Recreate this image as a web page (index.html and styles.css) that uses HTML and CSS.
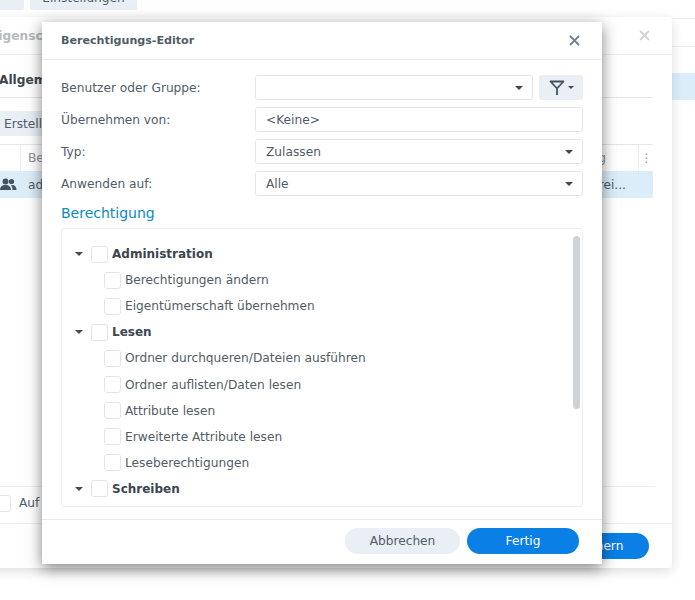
FILE: index.html
```html
<!DOCTYPE html>
<html lang="de">
  <head>
    <meta charset="UTF-8" />
    <meta name="viewport" content="width=device-width, initial-scale=1.0" />
    <title>Berechtigungs-Editor</title>
    <link rel="stylesheet" href="styles.css">
  </head>
  <body>
    <div class="desktop">
      <div class="top-tabs">
        <span class="top-tab top-tab-first"></span>
        <span class="top-tab">Einstellungen</span>
      </div>
      <div class="behind-lines"></div>

      <div class="window-back">
        <div class="back-head">
          <span class="back-title">Eigenschaften</span>
          <svg class="back-close" width="11" height="11" viewBox="0 0 11 11">
            <path d="M1 1l9 9M10 1l-9 9" stroke="#cfd2d5" stroke-width="1.800" fill="none" />
          </svg>
        </div>
        <div class="back-tabs"><b>Allgemein</b></div>
        <div class="back-body">
          <div class="back-toolbar"><span class="back-btn">Erstellen</span></div>
          <div class="back-table-head">
            <span class="back-col-icon"></span>
            <span class="back-col-name">Benutzer</span>
            <span class="back-col-last">g</span>
            <span class="back-col-more">⋮</span>
          </div>
          <div class="back-row">
            <svg class="back-user" width="17" height="13" viewBox="0 0 17 13">
              <circle cx="5.5" cy="3.5" r="3" fill="#45525f" />
              <path d="M0 12c0-3 2-5 5.5-5s5.5 2 5.5 5z" fill="#45525f" />
              <circle cx="11.5" cy="3.5" r="2.6" fill="#45525f" />
              <path d="M12 7c3 0 4.500 2 4.500 5H12.500c0-2-.5-3.500-1.500-4.700z" fill="#45525f" />
            </svg>
            <span class="back-col-name">admin</span>
            <span class="back-row-last">Lesen, Schrei...</span>
          </div>
        </div>
        <div class="back-check-row">
          <span class="check"></span>
          <span>Auf untergeordnete Objekte anwenden</span>
        </div>
        <div class="back-foot"><span class="btn-primary back-save">Speichern</span></div>
      </div>

      <div class="dialog">
        <div class="dialog-head">
          <span class="dialog-title">Berechtigungs-Editor</span>
          <svg class="dialog-close" width="11" height="11" viewBox="0 0 11 11">
            <path d="M1 1l9 9M10 1l-9 9" stroke="#77808a" stroke-width="1.800" fill="none" />
          </svg>
        </div>

        <div class="dialog-body">
          <div class="form-row">
            <label>Benutzer oder Gruppe:</label>
            <div class="field field-short"><span></span><i class="caret"></i></div>
            <div class="filter-btn">
              <svg width="16" height="16" viewBox="0 0 16 16">
                <path d="M1.500 1.500h13L8 8.500zM8 8.500V15" fill="none" stroke="#45525f" stroke-width="1.800" stroke-linejoin="round" />
              </svg>
              <i class="caret caret-small"></i>
            </div>
          </div>
          <div class="form-row">
            <label>Übernehmen von:</label>
            <div class="field"><span>&lt;Keine&gt;</span></div>
          </div>
          <div class="form-row">
            <label>Typ:</label>
            <div class="field"><span>Zulassen</span><i class="caret"></i></div>
          </div>
          <div class="form-row">
            <label>Anwenden auf:</label>
            <div class="field"><span>Alle</span><i class="caret"></i></div>
          </div>

          <h2>Berechtigung</h2>

          <div class="tree">
            <div class="tree-scrollbar"></div>
            <div class="tree-row group"><i class="caret"></i><span class="check"></span><span>Administration</span></div>
            <div class="tree-row child"><span class="check"></span><span>Berechtigungen ändern</span></div>
            <div class="tree-row child"><span class="check"></span><span>Eigentümerschaft übernehmen</span></div>
            <div class="tree-row group"><i class="caret"></i><span class="check"></span><span>Lesen</span></div>
            <div class="tree-row child"><span class="check"></span><span>Ordner durchqueren/Dateien ausführen</span></div>
            <div class="tree-row child"><span class="check"></span><span>Ordner auflisten/Daten lesen</span></div>
            <div class="tree-row child"><span class="check"></span><span>Attribute lesen</span></div>
            <div class="tree-row child"><span class="check"></span><span>Erweiterte Attribute lesen</span></div>
            <div class="tree-row child"><span class="check"></span><span>Leseberechtigungen</span></div>
            <div class="tree-row group"><i class="caret"></i><span class="check"></span><span>Schreiben</span></div>
            <div class="tree-row child"><span class="check"></span></div>
          </div>
        </div>

        <div class="dialog-foot">
          <span class="btn-cancel">Abbrechen</span>
          <span class="btn-primary">Fertig</span>
        </div>
      </div>
    </div>
  </body>
</html>
```

FILE: styles.css
```css
* {
  box-sizing: border-box;
}
html,
body {
  margin: 0;
  height: 600px;
  overflow: hidden;
}
body {
  font-family: "DejaVu Sans", sans-serif;
  font-size: 12.2px;
  color: #515c67;
  background: #fff;
}
.desktop {
  position: relative;
  width: 695px;
  height: 600px;
  overflow: hidden;
}

/* page behind the windows */
.top-tabs {
  display: flex;
  gap: 6px;
  margin-left: -40px;
  margin-top: -14px;
  height: 24px;
}
.top-tab {
  display: flex;
  align-items: center;
  justify-content: center;
  width: 107px;
  background: #e9eff5;
  border-radius: 2px;
}
.top-tab-first {
  width: 64px;
}
.behind-lines {
  position: absolute;
  left: 660px;
  top: 18px;
  width: 40px;
  height: 82px;
  border-top: 1px solid #eceef0;
  background:
    linear-gradient(#eceef0, #eceef0) 0 27px / 100% 1px no-repeat,
    linear-gradient(#dcedfa, #dcedfa) 0 54px / 100% 28px no-repeat;
}

/* window behind the dialog */
.window-back {
  position: absolute;
  left: -30px;
  top: 17px;
  width: 702px;
  height: 551px;
  background: #fff;
  border-radius: 3px;
  box-shadow: 0 3px 12px rgba(0, 0, 0, 0.14);
  display: flex;
  flex-direction: column;
}
.back-head {
  height: 38px;
  flex: none;
  display: flex;
  align-items: center;
  justify-content: space-between;
  padding: 0 22px 0 20px;
  border-bottom: 1px solid #eceef0;
  color: #b5babf;
  font-weight: bold;
}
.back-tabs {
  flex: none;
  height: 43px;
  margin-right: 19px;
  padding: 18px 0 0 29px;
  border-bottom: 1px solid #e4e6e8;
  color: #3c4650;
}
.back-body {
  flex: 1;
  margin-right: 17px;
  padding-top: 13px;
  border-bottom: 1px solid #eceef0;
}
.back-toolbar {
  height: 33px;
}
.back-btn {
  display: inline-flex;
  align-items: center;
  height: 25px;
  margin-left: 10px;
  padding: 0 24px;
  background: #e9eff5;
  border-radius: 2px;
}
.back-table-head {
  display: flex;
  align-items: center;
  height: 27px;
  margin-right: 2px;
  border-top: 1px solid #e4e6e8;
  color: #8a929a;
}
.back-col-icon {
  width: 51px;
  height: 100%;
  border-right: 1px solid #eceef0;
}
.back-col-name {
  margin-left: 7px;
}
.back-col-last {
  margin-left: auto;
  margin-right: 32px;
}
.back-col-more {
  width: 15px;
  height: 100%;
  line-height: 26px;
  text-align: center;
  border-left: 1px solid #eceef0;
}
.back-row {
  display: flex;
  align-items: center;
  height: 27px;
  margin-right: 2px;
  background: #dcedfa;
}
.back-user {
  margin-left: 30px;
  margin-right: 4px;
}
.back-row-last {
  margin-left: auto;
  margin-right: 27px;
}
.back-check-row {
  flex: none;
  display: flex;
  align-items: center;
  gap: 8px;
  height: 37px;
  padding: 0 0 4px 24px;
  border-bottom: 1px solid #eceef0;
}
.back-foot {
  flex: none;
  height: 44px;
  display: flex;
  justify-content: flex-end;
  align-items: flex-start;
  padding: 9px 23px 0 0;
}
.back-save {
  width: 112px;
}

/* dialog */
.dialog {
  position: absolute;
  left: 42px;
  top: 22px;
  width: 560px;
  height: 542px;
  background: #fff;
  box-shadow: 0 4px 14px rgba(0, 0, 0, 0.5);
  display: flex;
  flex-direction: column;
}
.dialog-head {
  flex: none;
  height: 38px;
  display: flex;
  align-items: center;
  justify-content: space-between;
  padding: 0 22px 0 19px;
  border-bottom: 1px solid #e8eaec;
}
.dialog-title {
  font-weight: bold;
  font-size: 11.1px;
}
.dialog-body {
  flex: 1;
  padding: 15px 19px 0 19px;
  display: flex;
  flex-direction: column;
  gap: 7px;
  min-height: 0;
}
.form-row {
  display: flex;
  align-items: center;
  flex: none;
  height: 25px;
  gap: 6px;
}
.form-row label {
  width: 188px;
}
.field {
  flex: 1;
  height: 100%;
  display: flex;
  align-items: center;
  justify-content: space-between;
  padding: 0 9px 0 10px;
  border: 1px solid #e2e5e8;
  border-radius: 3px;
}
.filter-btn {
  width: 44px;
  height: 100%;
  flex: none;
  display: flex;
  align-items: center;
  justify-content: center;
  gap: 3px;
  background: #e9eff5;
  border-radius: 3px;
}
.caret {
  display: block;
  flex: none;
  width: 0;
  height: 0;
  border-left: 4px solid transparent;
  border-right: 4px solid transparent;
  border-top: 4px solid #3f4a55;
}
.caret-small {
  border-left-width: 3px;
  border-right-width: 3px;
  border-top-width: 3px;
}
h2 {
  margin: 0;
  flex: none;
  height: 18px;
  line-height: 20px;
  font-size: 14px;
  font-weight: normal;
  color: #0a8bc0;
}
.tree {
  position: relative;
  flex: none;
  height: 279px;
  padding-top: 12px;
  border: 1px solid #eceef0;
  border-radius: 3px;
  overflow: hidden;
}
.tree-scrollbar {
  position: absolute;
  right: 2px;
  top: 7px;
  width: 7px;
  height: 173px;
  background: #d0d3d6;
  border-radius: 4px;
}
.tree-row {
  display: flex;
  align-items: center;
  height: 26.1px;
}
.tree-row .check {
  margin-right: 4px;
}
.group {
  padding-left: 13px;
  font-weight: bold;
  font-size: 12px;
  color: #3c4650;
}
.group .caret {
  margin-right: 8px;
}
.child {
  padding-left: 42px;
}
.check {
  display: block;
  flex: none;
  width: 17px;
  height: 17px;
  background: #fff;
  border: 1px solid #e2e5e8;
  border-radius: 3px;
}
.dialog-foot {
  flex: none;
  height: 45px;
  display: flex;
  justify-content: flex-end;
  align-items: flex-start;
  gap: 7px;
  padding: 8px 23px 0 0;
  border-top: 1px solid #e8eaec;
}
.btn-cancel,
.btn-primary {
  display: flex;
  align-items: center;
  justify-content: center;
  height: 26px;
  border-radius: 13px;
}
.btn-cancel {
  width: 115px;
  background: #e9eff5;
}
.btn-primary {
  width: 112px;
  background: #0a7fe6;
  color: #fff;
}
```
